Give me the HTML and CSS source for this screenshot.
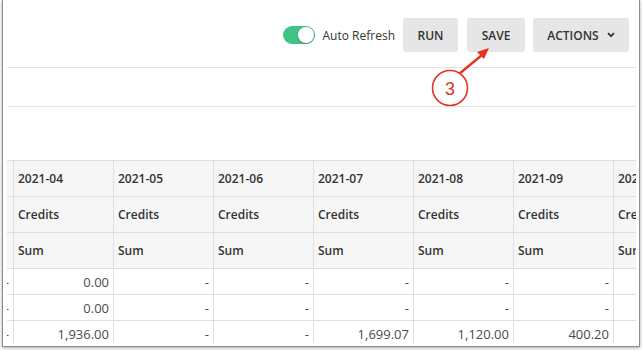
FILE: index.html
```html
<!DOCTYPE html>
<html>
<head>
<meta charset="utf-8">
<link rel="stylesheet" href="styles.css">
</head>
<body>
<div class="window">
  <div class="toolbar">
    <label class="auto-refresh">
      <span class="toggle"><span class="knob"></span></span>
      <span class="toggle-label">Auto Refresh</span>
    </label>
    <button class="btn btn-run">RUN</button>
    <button class="btn btn-save">SAVE</button>
    <button class="btn btn-actions">ACTIONS
      <svg class="chev" width="8" height="6" viewBox="0 0 8 6"><path d="M1 1.2 L4 4.2 L7 1.2" fill="none" stroke="#333" stroke-width="1.8"/></svg>
    </button>
  </div>
  <div class="band band-filters"></div>
  <div class="band band-spacer"></div>
  <div class="grid-viewport">
    <table class="grid">
      <colgroup>
        <col class="gcol"><col class="gcol"><col class="gcol"><col class="gcol"><col class="gcol"><col class="gcol"><col class="gcol"><col class="gcol">
      </colgroup>
      <thead>
        <tr class="hrow"><th>2021-03</th><th>2021-04</th><th>2021-05</th><th>2021-06</th><th>2021-07</th><th>2021-08</th><th>2021-09</th><th>2021-10</th></tr>
        <tr class="hrow"><th>Credits</th><th>Credits</th><th>Credits</th><th>Credits</th><th>Credits</th><th>Credits</th><th>Credits</th><th>Credits</th></tr>
        <tr class="hrow"><th>Sum</th><th>Sum</th><th>Sum</th><th>Sum</th><th>Sum</th><th>Sum</th><th>Sum</th><th>Sum</th></tr>
      </thead>
      <tbody>
        <tr class="brow"><td>-</td><td>0.00</td><td>-</td><td>-</td><td>-</td><td>-</td><td>-</td><td>-</td></tr>
        <tr class="brow"><td>-</td><td>0.00</td><td>-</td><td>-</td><td>-</td><td>-</td><td>-</td><td>-</td></tr>
        <tr class="brow"><td>-</td><td>1,936.00</td><td>-</td><td>-</td><td>1,699.07</td><td>1,120.00</td><td>400.20</td><td>-</td></tr>
        <tr class="brow"><td>-</td><td>-</td><td>-</td><td>-</td><td>-</td><td>-</td><td>-</td><td>-</td></tr>
      </tbody>
    </table>
  </div>
</div>
<svg class="callout" width="642" height="351" viewBox="0 0 642 351">
  <line x1="459" y1="74" x2="482" y2="55" stroke="#e8321f" stroke-width="2.4" stroke-linecap="round"/>
  <polygon points="489,48 477,52 484,59" fill="#e8321f"/>
  <circle cx="450" cy="88" r="17.5" fill="#fff" stroke="#e8321f" stroke-width="1.6"/>
  <text x="450" y="94.5" text-anchor="middle" class="callout-num">3</text>
</svg>
</body>
</html>
```
FILE: styles.css
```css
html, body {
  margin: 0;
  padding: 0;
  background: #fff;
}
body {
  font-family: "Open Sans", "Noto Sans", sans-serif;
  color: #333;
  position: relative;
  width: 642px;
  height: 351px;
  overflow: hidden;
}
.window {
  margin-left: 2px;
  width: 638px;
  height: 347px;
  box-sizing: border-box;
  border: 1px solid #8e8e8e;
  border-top: none;
  box-shadow: 0 1px 3px rgba(0, 0, 0, 0.35);
  padding: 0 3px 3px 4px;
  display: flex;
  flex-direction: column;
  overflow: hidden;
  background: #fff;
}
.toolbar {
  height: 68px;
  flex: none;
  box-sizing: border-box;
  border-bottom: 1px solid #e4e4e4;
  display: flex;
  justify-content: flex-end;
  align-items: flex-start;
  padding: 18px 7px 0 0;
  gap: 8px;
}
.auto-refresh {
  height: 34px;
  display: flex;
  align-items: center;
  gap: 8px;
}
.toggle {
  width: 32px;
  height: 18px;
  border-radius: 9px;
  background: #41c386;
  position: relative;
  display: block;
}
.knob {
  position: absolute;
  right: 1px;
  top: 1px;
  width: 16px;
  height: 16px;
  border-radius: 50%;
  background: #fff;
  box-shadow: 0 1px 2px rgba(0, 0, 0, 0.25);
}
.toggle-label {
  font-size: 12px;
  color: #333;
}
.btn {
  height: 34px;
  border: none;
  border-radius: 3px;
  background: #e6e6e6;
  font-family: "Open Sans", "Noto Sans", sans-serif;
  font-weight: 600;
  font-size: 12px;
  color: #333;
  padding: 0;
  display: flex;
  align-items: center;
  gap: 8px;
}
.btn-run { width: 55px; justify-content: center; }
.btn-save { width: 58px; justify-content: center; margin-left: 1px; }
.btn-actions { width: 96px; justify-content: center; }
.chev { display: block; margin-top: -1px; }
.band-filters {
  height: 39px;
  flex: none;
  box-sizing: border-box;
  border-bottom: 1px solid #e4e4e4;
}
.band-spacer {
  height: 53px;
  flex: none;
}
.grid-viewport {
  flex: 1;
  overflow: hidden;
}
.grid {
  border-collapse: collapse;
  table-layout: fixed;
  width: 800px;
  margin-left: -94px;
  font-size: 12px;
}
.gcol { width: 100px; }
.grid th, .grid td {
  border: 1px solid #dedede;
  padding: 0 4px;
  white-space: nowrap;
  overflow: hidden;
}
.grid th {
  background: #f6f6f6;
  text-align: left;
  font-weight: 600;
  color: #333;
}
.hrow { height: 36px; }
.brow { height: 26px; }
.grid td {
  text-align: right;
  font-size: 13px;
  color: #4a4a4a;
}
.callout {
  position: absolute;
  left: 0;
  top: 0;
  pointer-events: none;
}
.callout-num {
  font-family: "Liberation Sans", Arial, sans-serif;
  font-size: 18px;
  fill: #e8321f;
}
```
